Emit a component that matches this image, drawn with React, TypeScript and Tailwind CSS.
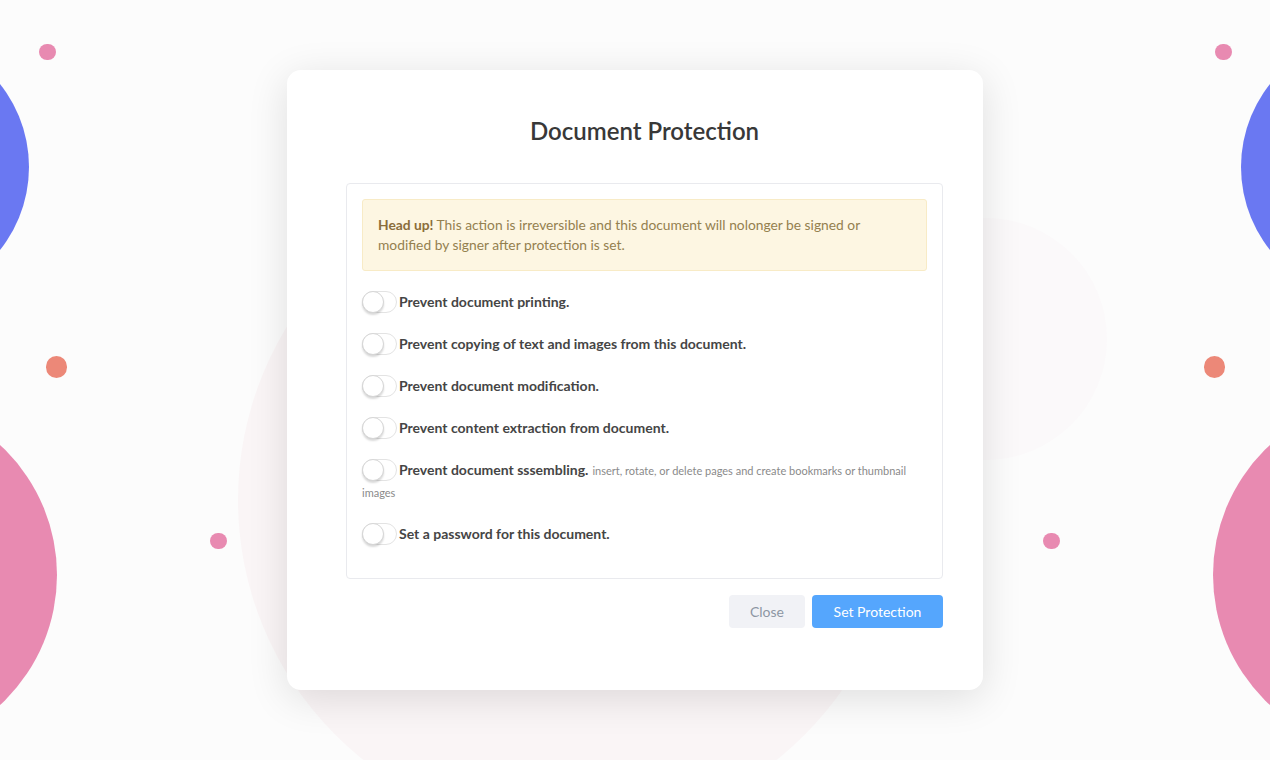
import { useState } from 'react';

const options = [
  { label: 'Prevent document printing.' },
  { label: 'Prevent copying of text and images from this document.' },
  { label: 'Prevent document modification.' },
  { label: 'Prevent content extraction from document.' },
  {
    label: 'Prevent document sssembling.',
    hint: 'insert, rotate, or delete pages and create bookmarks or thumbnail images',
  },
  { label: 'Set a password for this document.' },
];

function Toggle({ on, onChange }: { on: boolean; onChange: () => void }) {
  return (
    <button
      type="button"
      onClick={onChange}
      className={`relative inline-block align-top w-[35px] h-[22px] rounded-full border mr-[2px] ${
        on ? 'bg-[#55a6fd] border-[#55a6fd]' : 'bg-white border-[#e3e3e3]'
      }`}
    >
      <span
        className={`absolute top-[-1px] w-[22px] h-[22px] rounded-full bg-white border border-[#d6d6d6] shadow-[0_2px_2px_rgba(0,0,0,0.15)] ${
          on ? 'left-[12px]' : 'left-[-1px]'
        }`}
      />
    </button>
  );
}

export default function App() {
  const [checked, setChecked] = useState<boolean[]>(options.map(() => false));

  return (
    <div
      className="relative w-full h-[760px] overflow-hidden bg-[#fcfcfc] flex items-center justify-center"
      style={{ fontFamily: 'Lato, "Open Sans", sans-serif' }}
    >
      {/* background decoration */}
      <div className="absolute left-[238px] top-[168px] w-[664px] h-[664px] rounded-full bg-[#faf5f6]" />
      <div className="absolute left-[865px] top-[218px] w-[242px] h-[242px] rounded-full bg-[#fbf9fa]" />
      <div className="absolute left-[-237px] top-[34px] w-[266px] h-[266px] rounded-full bg-[#6a78f2]" />
      <div className="absolute left-[-297px] top-[398px] w-[354px] h-[354px] rounded-full bg-[#e88ab1]" />
      <div className="absolute left-[1241px] top-[34px] w-[266px] h-[266px] rounded-full bg-[#6a78f2]" />
      <div className="absolute left-[1213px] top-[398px] w-[354px] h-[354px] rounded-full bg-[#e88ab1]" />
      <div className="absolute left-[39px] top-[44px] w-[17px] h-[16px] rounded-full bg-[#e88ab1]" />
      <div className="absolute left-[46px] top-[356px] w-[21px] h-[22px] rounded-full bg-[#ec8878]" />
      <div className="absolute left-[210px] top-[533px] w-[17px] h-[16px] rounded-full bg-[#e88ab1]" />
      <div className="absolute left-[1215px] top-[44px] w-[17px] h-[16px] rounded-full bg-[#e88ab1]" />
      <div className="absolute left-[1204px] top-[356px] w-[21px] h-[22px] rounded-full bg-[#ec8878]" />
      <div className="absolute left-[1043px] top-[533px] w-[17px] h-[16px] rounded-full bg-[#e88ab1]" />

      {/* modal */}
      <div className="relative w-[696px] h-[620px] bg-white rounded-[14px] shadow-[0_8px_40px_rgba(0,0,0,0.12)] pl-[59px] pr-[40px] pt-[45px] pb-[62px]">
        <h2 className="text-center text-[24px] leading-[32px] font-semibold text-[#383838]">
          Document Protection
        </h2>

        <div className="mt-[36px] h-[396px] border border-[#e9eaee] rounded-[4px] p-[15px]">
          <div className="bg-[#fdf6e2] border border-[#f8ebc6] rounded-[3px] px-[15px] py-[15px] text-[13.8px] leading-[20px] text-[#94804f]">
            <strong className="font-bold text-[#8a6d3b]">Head up!</strong> This action is irreversible and this
            document will nolonger be signed or modified by signer after protection is set.
          </div>

          <div className="mt-[20px] flex flex-col gap-[20px]">
            {options.map((o, i) => (
              <div key={o.label} className="text-[14px] leading-[22px] text-[#454545]">
                <Toggle
                  on={checked[i]}
                  onChange={() => setChecked(checked.map((c, j) => (j === i ? !c : c)))}
                />
                <span className="font-bold">{o.label}</span>
                {o.hint && (
                  <span className="text-[11px] leading-[14px] text-[#8a8a8a] ml-1">{o.hint}</span>
                )}
              </div>
            ))}
          </div>
        </div>

        <div className="mt-[16px] flex justify-end gap-[7px]">
          <button className="h-[33px] w-[76px] rounded-[4px] bg-[#f1f2f6] text-[14px] text-[#8d96a3]">
            Close
          </button>
          <button className="h-[33px] w-[131px] rounded-[4px] bg-[#55a6fd] text-[14px] text-white">
            Set Protection
          </button>
        </div>
      </div>
    </div>
  );
}
